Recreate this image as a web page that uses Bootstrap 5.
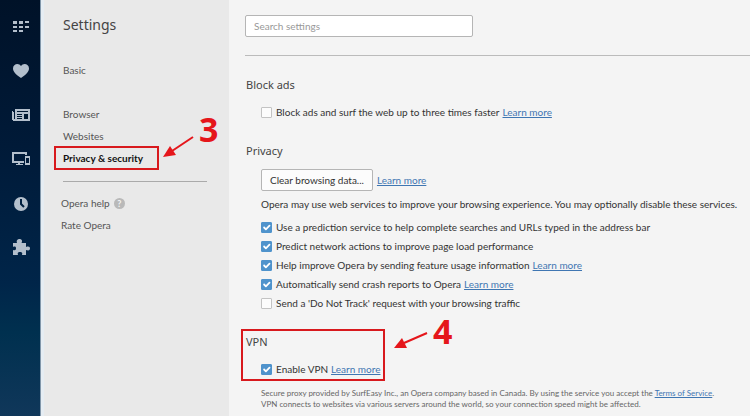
<!DOCTYPE html>
<html lang="en">
<head>
<meta charset="utf-8">
<meta name="viewport" content="width=device-width, initial-scale=1">
<title>Settings</title>
<link href="https://cdn.jsdelivr.net/npm/bootstrap@5.3.0/dist/css/bootstrap.min.css" rel="stylesheet">
<style>
body{font-family:Lato,"Noto Sans",sans-serif;font-size:10px;line-height:19px;color:#333;background:#f4f4f4}
a{color:#3f76b2}
.rail{width:41px;padding-top:15px;gap:20px;background:linear-gradient(#001228 0,#001a38 35%,#002549 68%,#00304f 80%,#10375a 100%);border-right:1px solid #8297aa}
.rail a,.rail svg{display:block;width:24px;height:24px}
.rail svg{fill:#b3bfcc}
.side{width:188px;background:#e9e9e9;border-left:3px solid #e6edf3;padding:14px 22px 0 19px}
.side h1{font-family:"Noto Sans",sans-serif;font-size:14px;line-height:22px;margin:0 0 23px;color:#444}
.side a{display:block;line-height:22px;color:#555;text-decoration:none}
.side a.chosen{color:#111;font-weight:700}
.side a.first{margin-bottom:22px}
.side hr,.content hr{border-color:#aaa;opacity:1}
.side hr{margin:12px 0 10px}
.support{margin-left:-2px}
.help-mark{width:11px;height:11px;border-radius:50%;background:#b9b9b9;color:#f4f4f4;font-size:9px;line-height:11px;font-weight:700;text-align:center}
.content{padding:15px 0 0 16px;min-width:0}
.search{width:228px;height:22px;font-size:10px;padding:0 8px;border:1px solid #b5b5b5;border-radius:2px}
.search::placeholder{color:#999}
.content hr{margin:18px 0 0;border-color:#bbb}
.content section{margin-top:19px}
.content h2{font-family:"Noto Sans",sans-serif;font-size:11px;line-height:20px;margin:0 0 8px 1px;color:#444;font-weight:400}
.block{margin-left:16px}
.opt{display:flex;align-items:center;gap:3px}
.tick{flex:none;width:11px;height:11px;margin:0 1px 0 0;border:1px solid #c3c3c3;background-color:#fcfcfc}
.tick[type=checkbox]{border-radius:1px}
.tick:checked{background-color:#4f93cc;border-color:#4f93cc}
.tick:checked[type=checkbox]{background-size:12px}
.clear{font-size:10px;line-height:20px;padding:0 8px;border:1px solid #b5b5b5;border-radius:2px;background:#fcfcfc;color:#333}
.note{font-size:8px;line-height:11px;color:#666;margin-top:9px}
.frame{position:absolute;border:2px solid #d8191d;pointer-events:none}
.frame-nav{inset:-1px 48px -1px -9px}
.frame-vpn{inset:-3px auto -2px -4px;width:144px}
.step{position:absolute;color:#e5161b;font-family:"Noto Sans",sans-serif;font-weight:700;font-size:34px;line-height:32px;pointer-events:none}
.step svg{position:absolute;fill:#e5161b;stroke:#e5161b}
.step-nav{left:136px;top:-34px}
.step-nav svg{left:-37px;top:23px}
.step-vpn{left:188px;top:-17px}
.step-vpn svg{left:-40px;top:16px}
</style>
<script src="https://cdn.jsdelivr.net/npm/bootstrap@5.3.0/dist/js/bootstrap.bundle.min.js" defer></script>
</head>
<body>
<div class="d-flex min-vh-100">
  <nav class="rail d-flex flex-column align-items-center flex-shrink-0" aria-label="Opera">
    <a href="#" aria-label="Speed dial"><svg viewBox="0 0 24 24"><path d="M5 6h4v3H5zm6 0h4v3h-4zm6 0h4v2h-4zM5 11h4v2H5zm6 0h4v2h-4zm6 0h4v2h-4zM5 15h4v2H5zm6 0h4v2h-4z"/></svg></a>
    <a href="#" aria-label="Bookmarks"><svg viewBox="0 0 24 24"><path d="M13 19C7 15 5 12 5 9.500c0-5 6-6 8-2.500 2-3.500 8-2.500 8 2.500 0 2.500-2 5.500-8 9.500z"/></svg></a>
    <a href="#" aria-label="News"><svg viewBox="0 0 24 24"><path d="M7 6h15v12H5V9h1v7h1z"/><path d="M4 8h1v9H4z"/><path fill="#001831" d="M9 8h11v1H9zm0 3h5v1H9zm0 2h5v1H9zm0 2h5v1H9zm7-4h4v5h-4z"/></svg></a>
    <a href="#" aria-label="Synced tabs"><svg viewBox="0 0 24 24"><path fill-rule="evenodd" d="M4 5h15v3h-2V7H6v7h10v2h-4v1h3v1H8v-1h2v-1H4zm13 4h5v9h-5zm1 2v5h3v-5z"/></svg></a>
    <a href="#" aria-label="History"><svg viewBox="0 0 24 24"><circle cx="13" cy="13" r="7"/><path d="M13 8v5l3 3" fill="none" stroke="#002040" stroke-width="2"/></svg></a>
    <a href="#" aria-label="Extensions"><svg viewBox="0 0 24 24"><path d="M5 8h4c-1-3 1-4 2.500-4s3.500 1 2 4H18v4c3-1 4 0 4 1.500s-1 2.500-4 1.500v5h-4c1-3-1-3-2-3s-3 0-2 3H5v-5c3 1 3-1 3-2s-1-2-3-1z"/></svg></a>
  </nav>
  <aside class="side flex-shrink-0">
    <h1 class="fw-normal">Settings</h1>
    <nav aria-label="Settings">
      <a class="first" href="#">Basic</a>
      <a href="#">Browser</a>
      <a href="#">Websites</a>
      <div class="position-relative">
        <a class="chosen" href="#" aria-current="page">Privacy &amp; security</a>
        <span class="frame frame-nav"></span>
        <span class="step step-nav">3<svg width="34" height="22" viewBox="0 0 34 22"><path d="M31 1 10 15" stroke-width="2"/><path d="M1 21 8 10l6 9z" stroke="none"/></svg></span>
      </div>
    </nav>
    <hr>
    <div class="support">
      <a class="d-flex align-items-center gap-1" href="#">Opera help <span class="help-mark">?</span></a>
      <a href="#">Rate Opera</a>
    </div>
  </aside>
  <main class="content flex-grow-1">
    <input class="search form-control" type="search" placeholder="Search settings" aria-label="Search settings">
    <hr>
    <section>
      <h2>Block ads</h2>
      <div class="block opt">
        <input class="form-check-input tick" type="checkbox" id="ads"><label for="ads">Block ads and surf the web up to three times faster</label><a href="#">Learn more</a>
      </div>
    </section>
    <section>
      <h2>Privacy</h2>
      <div class="block">
        <div class="d-flex align-items-center gap-1"><button class="clear" type="button">Clear browsing data...</button><a href="#">Learn more</a></div>
        <p class="mt-1 mb-1">Opera may use web services to improve your browsing experience. You may optionally disable these services.</p>
        <div class="opt"><input class="form-check-input tick" type="checkbox" id="predict" checked><label for="predict">Use a prediction service to help complete searches and URLs typed in the address bar</label></div>
        <div class="opt"><input class="form-check-input tick" type="checkbox" id="network" checked><label for="network">Predict network actions to improve page load performance</label></div>
        <div class="opt"><input class="form-check-input tick" type="checkbox" id="usage" checked><label for="usage">Help improve Opera by sending feature usage information</label><a href="#">Learn more</a></div>
        <div class="opt"><input class="form-check-input tick" type="checkbox" id="crash" checked><label for="crash">Automatically send crash reports to Opera</label><a href="#">Learn more</a></div>
        <div class="opt"><input class="form-check-input tick" type="checkbox" id="track"><label for="track">Send a 'Do Not Track' request with your browsing traffic</label></div>
      </div>
    </section>
    <section>
      <div class="position-relative">
        <h2>VPN</h2>
        <div class="block opt"><input class="form-check-input tick" type="checkbox" id="vpn" checked><label for="vpn">Enable VPN</label><a href="#">Learn more</a></div>
        <span class="frame frame-vpn"></span>
        <span class="step step-vpn">4<svg width="36" height="20" viewBox="0 0 36 20"><path d="M34 2 11 12" stroke-width="2"/><path d="M1 17 9 7l5 10z" stroke="none"/></svg></span>
      </div>
      <p class="note block mb-0">Secure proxy provided by SurfEasy Inc., an Opera company based in Canada. By using the service you accept the <a href="#">Terms of Service</a>.<br>VPN connects to websites via various servers around the world, so your connection speed might be affected.</p>
    </section>
  </main>
</div>
</body>
</html>
